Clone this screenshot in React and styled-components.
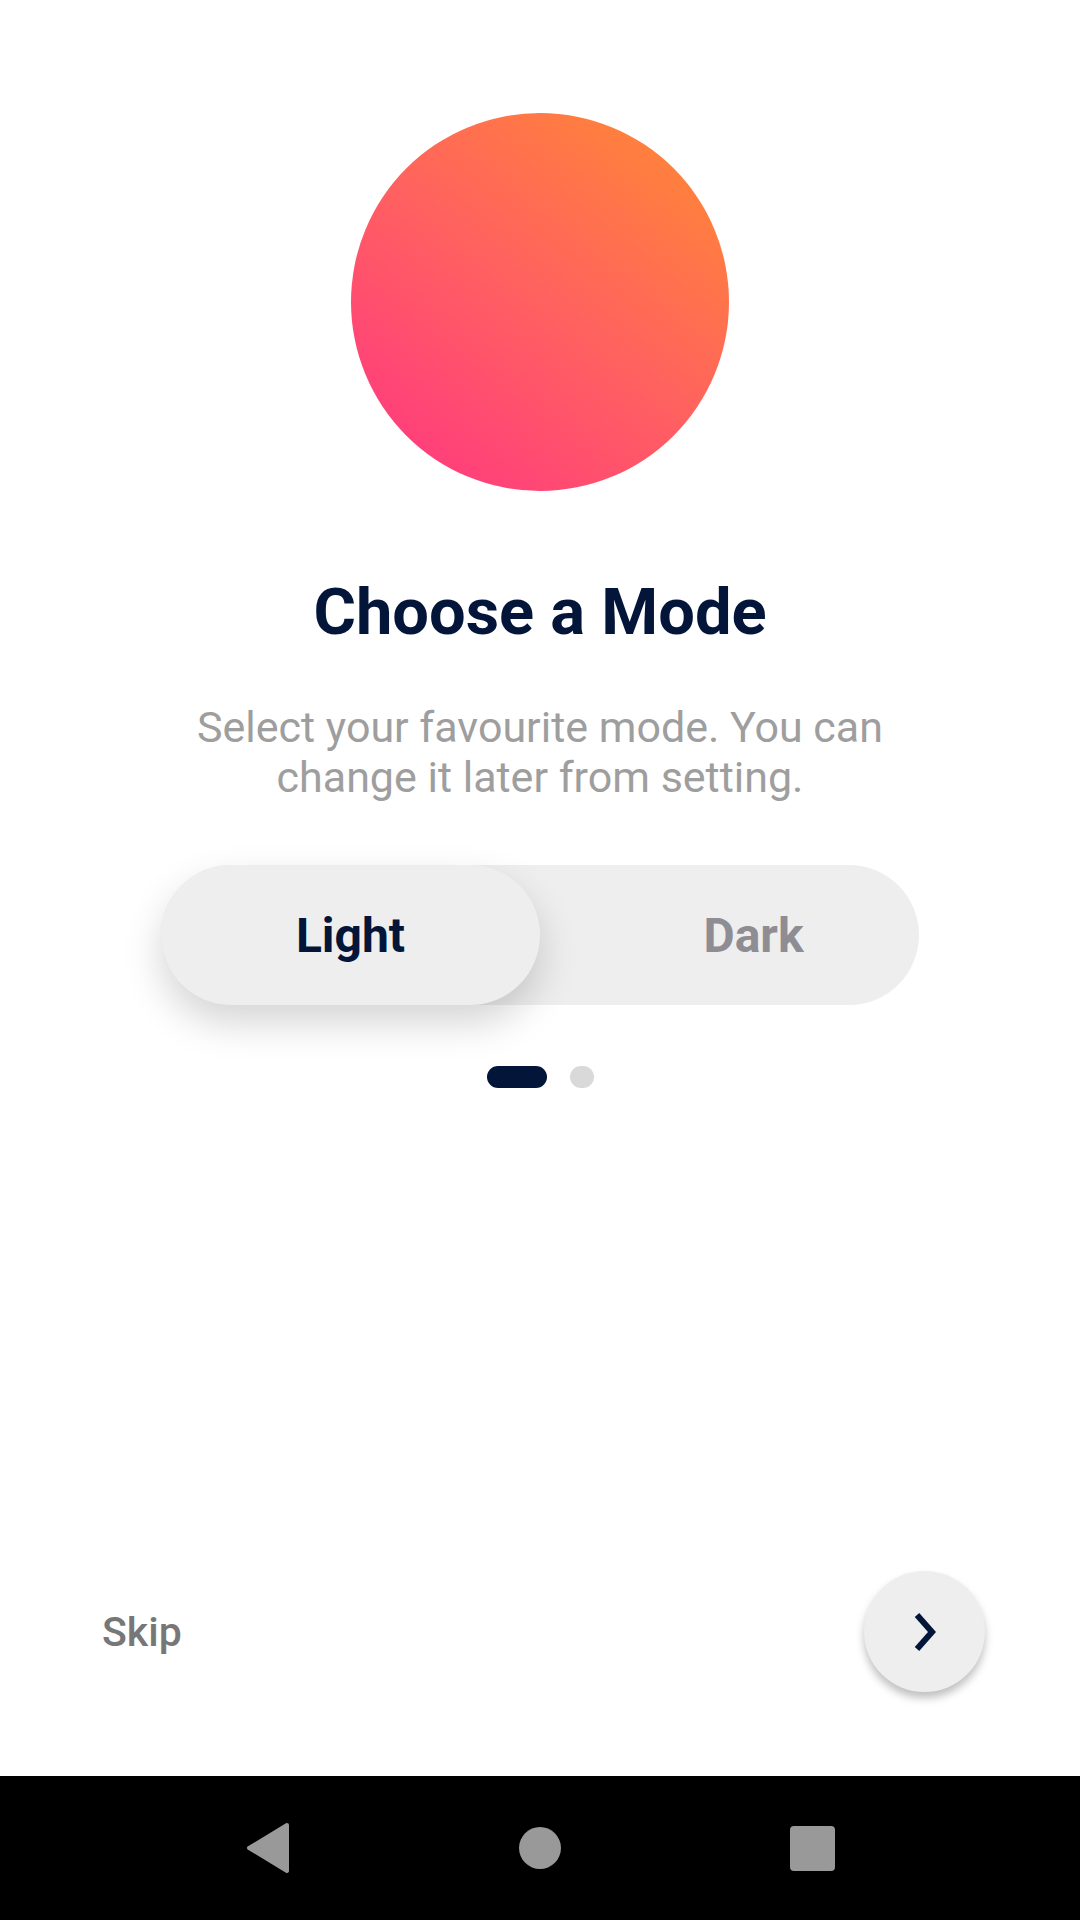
import React, { useState } from "react";
import styled, { createGlobalStyle } from "styled-components";

const GlobalStyle = createGlobalStyle`
  html, body {
    margin: 0;
    padding: 0;
    background: #fff;
  }
  * {
    box-sizing: border-box;
  }
`;

const Screen = styled.div`
  width: 1080px;
  height: 1920px;
  display: flex;
  flex-direction: column;
  font-family: Roboto, "Noto Sans", sans-serif;
  background: #fff;
  overflow: hidden;
`;

const Content = styled.div`
  flex: 1;
  display: flex;
  flex-direction: column;
  align-items: center;
  padding-top: 113px;
`;

const Blob = styled.div`
  width: 378px;
  height: 378px;
  border-radius: 50%;
  background: linear-gradient(38deg, #ff3384 0%, #ff6160 50%, #ff8c30 100%);
`;

const Title = styled.h1`
  margin: 82px 0 0;
  font-size: 65px;
  line-height: 79px;
  font-weight: 700;
  color: #03163a;
  text-align: center;
`;

const Subtitle = styled.p`
  margin: 50px 0 0;
  max-width: 740px;
  font-size: 43px;
  line-height: 50px;
  font-weight: 400;
  color: #9e9e9e;
  text-align: center;
`;

const Toggle = styled.div`
  margin-top: 63px;
  width: 758px;
  height: 140px;
  border-radius: 70px;
  background: #eeeeee;
  display: flex;
`;

const Option = styled.button`
  width: 379px;
  flex-shrink: 0;
  height: 140px;
  border: none;
  border-radius: 70px;
  padding: 0 0 0 ${(p) => (p.$active ? 0 : 48)}px;
  background: ${(p) => (p.$active ? "#eeeeee" : "transparent")};
  box-shadow: ${(p) => (p.$active ? "0 18px 38px rgba(0, 0, 0, 0.17)" : "none")};
  font-family: inherit;
  font-size: 48px;
  font-weight: 700;
  color: ${(p) => (p.$active ? "#03163a" : "#8e8d93")};
  cursor: pointer;
  position: relative;
  z-index: ${(p) => (p.$active ? 1 : 0)};
`;

const Dots = styled.div`
  margin-top: 61px;
  display: flex;
  gap: 23px;
`;

const Dot = styled.span`
  display: block;
  height: 22px;
  width: ${(p) => (p.$active ? 60 : 24)}px;
  border-radius: 11px;
  background: ${(p) => (p.$active ? "#03163a" : "#d9d9d9")};
`;

const BottomRow = styled.div`
  display: flex;
  align-items: center;
  justify-content: space-between;
  padding: 0 95px 84px 102px;
`;

const SkipButton = styled.button`
  border: none;
  background: none;
  padding: 0;
  font-family: inherit;
  font-size: 41px;
  font-weight: 500;
  color: #777777;
  cursor: pointer;
`;

const NextButton = styled.button`
  width: 121px;
  height: 121px;
  border-radius: 50%;
  border: none;
  padding: 0;
  background: #eeeeee;
  box-shadow: 0 6px 9px rgba(0, 0, 0, 0.25);
  display: flex;
  align-items: center;
  justify-content: center;
  cursor: pointer;
`;

const NavBar = styled.div`
  height: 144px;
  background: #000;
  display: flex;
  align-items: center;
  justify-content: center;
`;

const NavSlot = styled.div`
  width: 272px;
  display: flex;
  justify-content: center;
`;

export default function App() {
  const [mode, setMode] = useState("light");

  return (
    <>
      <GlobalStyle />
      <Screen>
        <Content>
          <Blob />
          <Title>Choose a Mode</Title>
          <Subtitle>Select your favourite mode. You can change it later from setting.</Subtitle>
          <Toggle>
            <Option $active={mode === "light"} onClick={() => setMode("light")}>
              Light
            </Option>
            <Option $active={mode === "dark"} onClick={() => setMode("dark")}>
              Dark
            </Option>
          </Toggle>
          <Dots>
            <Dot $active />
            <Dot />
          </Dots>
        </Content>

        <BottomRow>
          <SkipButton>Skip</SkipButton>
          <NextButton aria-label="Next">
            <svg width="40" height="40" viewBox="0 0 40 40">
              <polyline
                points="12,3 27,20 12,37"
                fill="none"
                stroke="#03163a"
                strokeWidth="6"
                strokeLinejoin="miter"
              />
            </svg>
          </NextButton>
        </BottomRow>

        <NavBar>
          <NavSlot>
            <svg width="44" height="52" viewBox="0 0 44 52">
              <path
                d="M41 3 L3 26 L41 49 Z"
                fill="#999999"
                stroke="#999999"
                strokeWidth="4"
                strokeLinejoin="round"
              />
            </svg>
          </NavSlot>
          <NavSlot>
            <svg width="42" height="42" viewBox="0 0 42 42">
              <circle cx="21" cy="21" r="21" fill="#999999" />
            </svg>
          </NavSlot>
          <NavSlot>
            <svg width="45" height="45" viewBox="0 0 45 45">
              <rect x="0" y="0" width="45" height="45" rx="4" fill="#999999" />
            </svg>
          </NavSlot>
        </NavBar>
      </Screen>
    </>
  );
}
